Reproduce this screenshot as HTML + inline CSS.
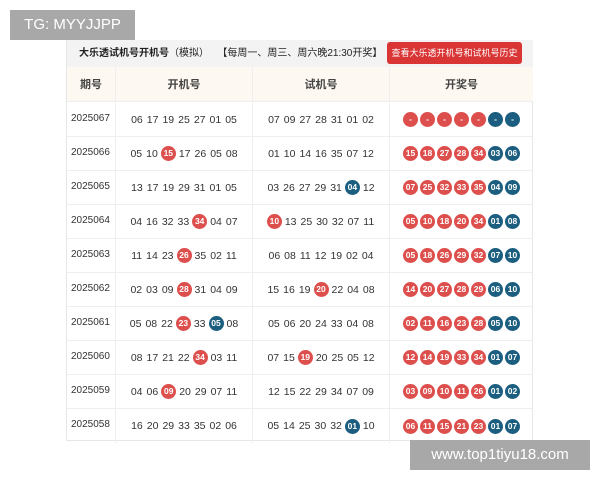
<!DOCTYPE html>
<html><head><meta charset="utf-8"><style>
*{margin:0;padding:0;box-sizing:border-box}
body{width:600px;height:480px;background:#fff;position:relative;overflow:hidden;font-family:"Liberation Sans","Noto Sans CJK SC",sans-serif;color:#333}
.tbl{position:absolute;left:66px;top:40px;width:467px;height:401px;border:1px solid #e6e6e6;border-top:none}
.title{position:absolute;left:0;top:0;width:466px;height:27px;background:#f3f3f3;font-size:10px;line-height:27px;padding-left:12px;color:#222}
.title b{font-weight:bold}
.btn{position:absolute;left:320px;top:2px;width:135px;height:22px;background:#d93535;color:#fff;border-radius:3px;font-size:9px;line-height:22px;text-align:center}
.hdr{position:absolute;left:0;top:27px;width:466px;height:35px;background:#fdf9f2;border-bottom:1px solid #eee}
.row{position:absolute;left:0;width:466px;height:34px;border-bottom:1px solid #eee}
.c{position:absolute;top:0;height:100%;display:flex;align-items:center;justify-content:center;font-size:10.5px;white-space:nowrap}
.c0{left:0;width:49px;border-right:1px solid #eee}
.c1{left:49px;width:137px;border-right:1px solid #eee}
.c2{left:186px;width:137px;border-right:1px solid #eee}
.c3{left:323px;width:143px}
.hdr .c{font-size:11px;font-weight:bold;color:#444}
.row .c0{font-size:10px;justify-content:flex-start;padding-left:4px;align-items:flex-start;padding-top:10px}
.n{margin:0 2px}
.r,.b{display:inline-block;width:15px;height:15px;border-radius:50%;color:#fff;font-size:8.5px;font-weight:bold;line-height:15px;text-align:center;margin:0 1px}
.r{background:#dd4f4d}.b{background:#1b5e7f}
.c3 .r,.c3 .b{margin:0 1px}
.wm{position:absolute;background:#a8a8a8;color:#fff;font-size:16px;text-align:center}
</style></head><body>
<div class="tbl">
<div class="title"><b>大乐透试机号开机号</b>（模拟） &nbsp; 【每周一、周三、周六晚21:30开奖】<div class="btn">查看大乐透开机号和试机号历史</div></div>
<div class="hdr"><div class="c c0">期号</div><div class="c c1">开机号</div><div class="c c2">试机号</div><div class="c c3">开奖号</div></div>
<div class="row" style="top:63px"><div class="c c0">2025067</div><div class="c c1"><span class="n">06</span><span class="n">17</span><span class="n">19</span><span class="n">25</span><span class="n">27</span><span class="n">01</span><span class="n">05</span></div><div class="c c2"><span class="n">07</span><span class="n">09</span><span class="n">27</span><span class="n">28</span><span class="n">31</span><span class="n">01</span><span class="n">02</span></div><div class="c c3"><span class="r">-</span><span class="r">-</span><span class="r">-</span><span class="r">-</span><span class="r">-</span><span class="b">-</span><span class="b">-</span></div></div>
<div class="row" style="top:97px"><div class="c c0">2025066</div><div class="c c1"><span class="n">05</span><span class="n">10</span><span class="r">15</span><span class="n">17</span><span class="n">26</span><span class="n">05</span><span class="n">08</span></div><div class="c c2"><span class="n">01</span><span class="n">10</span><span class="n">14</span><span class="n">16</span><span class="n">35</span><span class="n">07</span><span class="n">12</span></div><div class="c c3"><span class="r">15</span><span class="r">18</span><span class="r">27</span><span class="r">28</span><span class="r">34</span><span class="b">03</span><span class="b">06</span></div></div>
<div class="row" style="top:131px"><div class="c c0">2025065</div><div class="c c1"><span class="n">13</span><span class="n">17</span><span class="n">19</span><span class="n">29</span><span class="n">31</span><span class="n">01</span><span class="n">05</span></div><div class="c c2"><span class="n">03</span><span class="n">26</span><span class="n">27</span><span class="n">29</span><span class="n">31</span><span class="b">04</span><span class="n">12</span></div><div class="c c3"><span class="r">07</span><span class="r">25</span><span class="r">32</span><span class="r">33</span><span class="r">35</span><span class="b">04</span><span class="b">09</span></div></div>
<div class="row" style="top:165px"><div class="c c0">2025064</div><div class="c c1"><span class="n">04</span><span class="n">16</span><span class="n">32</span><span class="n">33</span><span class="r">34</span><span class="n">04</span><span class="n">07</span></div><div class="c c2"><span class="r">10</span><span class="n">13</span><span class="n">25</span><span class="n">30</span><span class="n">32</span><span class="n">07</span><span class="n">11</span></div><div class="c c3"><span class="r">05</span><span class="r">10</span><span class="r">18</span><span class="r">20</span><span class="r">34</span><span class="b">01</span><span class="b">08</span></div></div>
<div class="row" style="top:199px"><div class="c c0">2025063</div><div class="c c1"><span class="n">11</span><span class="n">14</span><span class="n">23</span><span class="r">26</span><span class="n">35</span><span class="n">02</span><span class="n">11</span></div><div class="c c2"><span class="n">06</span><span class="n">08</span><span class="n">11</span><span class="n">12</span><span class="n">19</span><span class="n">02</span><span class="n">04</span></div><div class="c c3"><span class="r">05</span><span class="r">18</span><span class="r">26</span><span class="r">29</span><span class="r">32</span><span class="b">07</span><span class="b">10</span></div></div>
<div class="row" style="top:233px"><div class="c c0">2025062</div><div class="c c1"><span class="n">02</span><span class="n">03</span><span class="n">09</span><span class="r">28</span><span class="n">31</span><span class="n">04</span><span class="n">09</span></div><div class="c c2"><span class="n">15</span><span class="n">16</span><span class="n">19</span><span class="r">20</span><span class="n">22</span><span class="n">04</span><span class="n">08</span></div><div class="c c3"><span class="r">14</span><span class="r">20</span><span class="r">27</span><span class="r">28</span><span class="r">29</span><span class="b">06</span><span class="b">10</span></div></div>
<div class="row" style="top:267px"><div class="c c0">2025061</div><div class="c c1"><span class="n">05</span><span class="n">08</span><span class="n">22</span><span class="r">23</span><span class="n">33</span><span class="b">05</span><span class="n">08</span></div><div class="c c2"><span class="n">05</span><span class="n">06</span><span class="n">20</span><span class="n">24</span><span class="n">33</span><span class="n">04</span><span class="n">08</span></div><div class="c c3"><span class="r">02</span><span class="r">11</span><span class="r">16</span><span class="r">23</span><span class="r">28</span><span class="b">05</span><span class="b">10</span></div></div>
<div class="row" style="top:301px"><div class="c c0">2025060</div><div class="c c1"><span class="n">08</span><span class="n">17</span><span class="n">21</span><span class="n">22</span><span class="r">34</span><span class="n">03</span><span class="n">11</span></div><div class="c c2"><span class="n">07</span><span class="n">15</span><span class="r">19</span><span class="n">20</span><span class="n">25</span><span class="n">05</span><span class="n">12</span></div><div class="c c3"><span class="r">12</span><span class="r">14</span><span class="r">19</span><span class="r">33</span><span class="r">34</span><span class="b">01</span><span class="b">07</span></div></div>
<div class="row" style="top:335px"><div class="c c0">2025059</div><div class="c c1"><span class="n">04</span><span class="n">06</span><span class="r">09</span><span class="n">20</span><span class="n">29</span><span class="n">07</span><span class="n">11</span></div><div class="c c2"><span class="n">12</span><span class="n">15</span><span class="n">22</span><span class="n">29</span><span class="n">34</span><span class="n">07</span><span class="n">09</span></div><div class="c c3"><span class="r">03</span><span class="r">09</span><span class="r">10</span><span class="r">11</span><span class="r">26</span><span class="b">01</span><span class="b">02</span></div></div>
<div class="row" style="top:369px;border-bottom:none"><div class="c c0">2025058</div><div class="c c1"><span class="n">16</span><span class="n">20</span><span class="n">29</span><span class="n">33</span><span class="n">35</span><span class="n">02</span><span class="n">06</span></div><div class="c c2"><span class="n">05</span><span class="n">14</span><span class="n">25</span><span class="n">30</span><span class="n">32</span><span class="b">01</span><span class="n">10</span></div><div class="c c3"><span class="r">06</span><span class="r">11</span><span class="r">15</span><span class="r">21</span><span class="r">23</span><span class="b">01</span><span class="b">07</span></div></div>
</div>
<div class="wm" style="left:10px;top:10px;width:125px;height:30px;line-height:30px;font-size:15px">TG: MYYJJPP</div>
<div class="wm" style="left:410px;top:440px;width:180px;height:30px;line-height:30px;font-size:15px">www.top1tiyu18.com</div>
</body></html>
